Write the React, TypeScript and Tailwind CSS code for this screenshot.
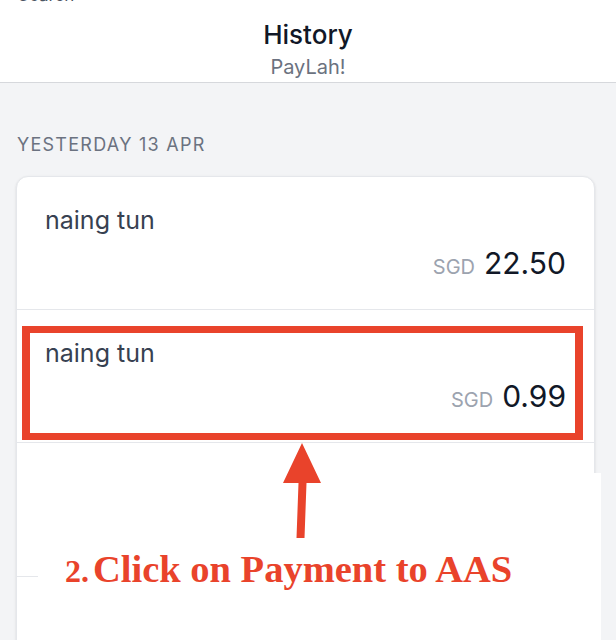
import React from "react";

function Row({ amount }: { amount: string }) {
  return (
    <div className="px-7 pt-7 pb-[24px] flex flex-col">
      <div className="text-[25px] leading-[30px] text-[#374151]">naing tun</div>
      <div className="mt-[10px] flex items-baseline justify-end">
        <span className="text-[20px] text-[#9ca3af] leading-[36px]">SGD</span>
        <span className="ml-[9px] text-[30px] leading-[36px] text-[#111827]">{amount}</span>
      </div>
    </div>
  );
}

export default function App() {
  return (
    <div
      className="relative h-[640px] overflow-hidden bg-[#f3f4f6]"
      style={{ fontFamily: "Inter, 'Noto Sans', sans-serif" }}
    >
      <div className="bg-white h-[83px] border-b border-[#d6d8dc] flex flex-col items-center">
        <div className="self-start ml-[18px] -mt-[15px] text-[17px] leading-[20px] h-[20px] text-[#4b5563]">
          Search
        </div>
        <div className="mt-[14px] text-[26px] leading-[32px] font-medium text-[#111827]">History</div>
        <div className="mt-[4px] text-[20px] leading-[24px] text-[#6b7280]">PayLah!</div>
      </div>

      <div className="pt-[50px] pl-[17px] text-[18px] leading-[24px] tracking-[0.07em] text-[#6b7280]">
        YESTERDAY 13 APR
      </div>

      <div className="relative mt-[19px] ml-4 mr-[21px] rounded-[12px] bg-white border border-[#e5e7eb] shadow-sm">
        <div className="border-b border-[#e5e7eb]">
          <Row amount="22.50" />
        </div>
        <div className="border-b border-[#e5e7eb]">
          <Row amount="0.99" />
        </div>
        <div className="h-[134px] border-b border-[#e5e7eb]" />
        <div className="h-[133px]" />
        <div className="absolute left-[5px] top-[149px] w-[561px] h-[114px] border-x-8 border-y-[7px] border-[#e9432b]" />
      </div>

      <div className="absolute left-[38px] top-[473px] w-[563px] bottom-0 bg-white">
        <div
          className="mt-[74px] pl-[27px] flex items-baseline font-bold text-[#e9432b] leading-[44px]"
          style={{ fontFamily: "'Liberation Serif', 'Times New Roman', serif" }}
        >
          <span className="text-[32px]">2.</span>
          <span className="ml-[4px] text-[38.5px]">Click on Payment to AAS</span>
        </div>
      </div>

      <svg className="absolute left-[280px] top-[440px]" width="44" height="100" viewBox="0 0 44 100">
        <polygon points="22,3 41,43 26.5,43 24.5,98 16.5,98 18.5,43 3,43" fill="#e9432b" />
      </svg>
    </div>
  );
}
